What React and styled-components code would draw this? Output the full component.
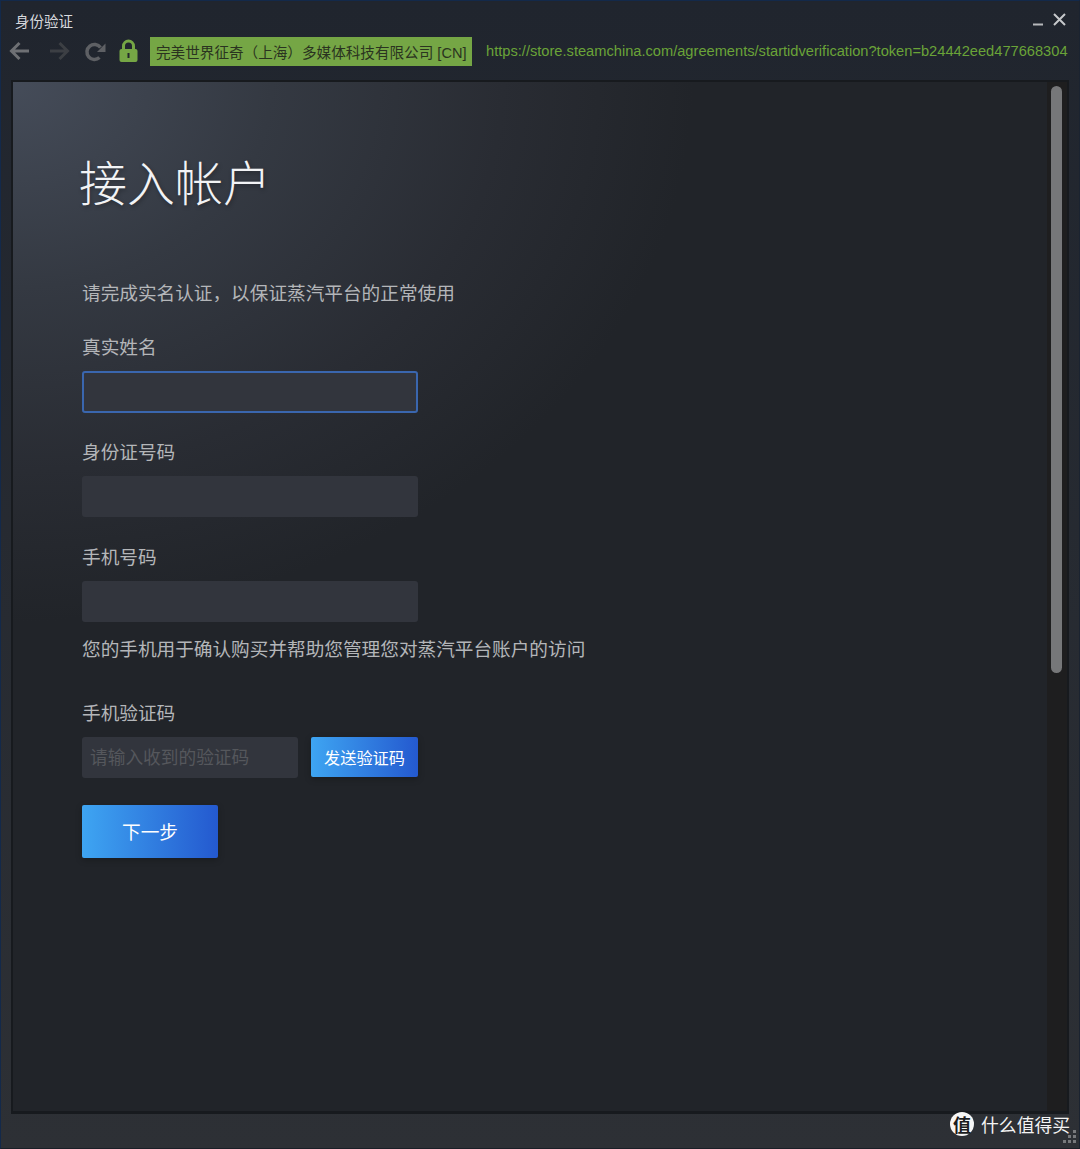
import React from "react";
import styled, { createGlobalStyle } from "styled-components";

const Global = createGlobalStyle`
  html, body { margin: 0; padding: 0; background: #23262c; }
  * { box-sizing: border-box; }
`;

const cjk = `"Noto Sans CJK SC", "Liberation Sans", sans-serif`;

const Win = styled.div`
  position: relative;
  width: 1080px;
  height: 1149px;
  display: flex;
  flex-direction: column;
  overflow: hidden;
  border: 1px solid #13294a;
  border-right-color: #1b2330;
  border-bottom-color: #1a1f27;
  background: linear-gradient(180deg, #20252e 0%, #2d3035 100%);
  font-family: ${cjk};
`;

const TitleBar = styled.div`
  height: 33px;
  flex: none;
  display: flex;
  align-items: center;
  justify-content: space-between;
  padding: 7px 12px 0 14px;
`;

const Title = styled.div`
  color: #d8dade;
  font-size: 14.5px;
  line-height: 20px;
`;

const WinButtons = styled.div`
  display: flex;
  align-items: center;
  gap: 8px;
  margin-top: -4px;
`;

const Toolbar = styled.div`
  height: 34px;
  flex: none;
  display: flex;
  align-items: center;
  padding-left: 7px;
`;

const NavIcon = styled.svg`
  flex: none;
  display: block;
  margin-right: ${(p) => p.$gap || 0}px;
`;

const Badge = styled.div`
  flex: none;
  width: 322px;
  height: 29px;
  margin: 0 14px 0 12px;
  padding-left: 6px;
  display: flex;
  align-items: center;
  background: #75a645;
  color: #2a3320;
  font-family: "Liberation Sans", "Noto Sans CJK SC", sans-serif;
  font-size: 14.6px;
  white-space: nowrap;
`;

const Url = styled.div`
  color: #6aa338;
  font-family: "Liberation Sans", Arial, sans-serif;
  font-size: 14.65px;
  line-height: 18px;
  margin-top: -1px;
  white-space: nowrap;
`;

const Frame = styled.div`
  flex: none;
  margin: 12px 10px 0 10px;
  height: 1034px;
  border: 2px solid #171a1e;
  border-bottom-width: 3px;
  display: flex;
  background: #212429;
`;

const Page = styled.div`
  flex: 1;
  padding: 70px 0 0 69px;
  background: radial-gradient(ellipse 680px 540px at 0 0, #454c59 0%, #343942 38%, #292c33 72%, #212429 100%);
`;

const Heading = styled.h1`
  margin: 0 0 70px -3px;
  color: #f2f3f5;
  font-size: 48px;
  font-weight: 300;
  line-height: 56px;
  text-shadow: 1px 2px 4px rgba(0, 0, 0, 0.3);
`;

const Intro = styled.p`
  margin: 0 0 26px;
  color: #b4b6b9;
  font-size: 18.65px;
  line-height: 28px;
`;

const Label = styled.label`
  display: block;
  color: #b4b6b9;
  font-size: 18.65px;
  line-height: 28px;
  margin-bottom: 11px;
`;

const Field = styled.div`
  margin-bottom: ${(p) => p.$mb}px;
`;

const Input = styled.input`
  display: block;
  width: ${(p) => p.$w || 336}px;
  height: ${(p) => (p.$focus ? 42 : 41)}px;
  border-radius: 3px;
  border: ${(p) => (p.$focus ? "2px solid #3a66ae" : "none")};
  background: #32353d;
  outline: none;
  padding: 0 8px 3px;
  color: #ddd;
  font-family: ${cjk};
  font-size: 17.7px;
  &::placeholder { color: #55575c; opacity: 1; }
`;

const Help = styled.p`
  margin: 0 0 36px;
  color: #b4b6b9;
  font-size: 18.65px;
  line-height: 28px;
`;

const CodeRow = styled.div`
  display: flex;
  align-items: flex-start;
  gap: 13px;
  margin-bottom: 27px;
`;

const GradButton = styled.button`
  display: block;
  border: none;
  border-radius: 2px;
  padding: 0 0 ${(p) => p.$pb}px;
  width: ${(p) => p.$w}px;
  height: ${(p) => p.$h}px;
  background: linear-gradient(90deg, #3ea5f2 0%, #2459cf 100%);
  box-shadow: 0 2px 6px rgba(0, 0, 0, 0.25);
  color: #fff;
  font-family: ${cjk};
  font-size: ${(p) => p.$fs}px;
  cursor: pointer;
`;

const Track = styled.div`
  flex: none;
  width: 20px;
  background: #1e1e1f;
  padding: 4px 5px 0 4px;
`;

const Thumb = styled.div`
  width: 11px;
  height: 587px;
  border-radius: 6px;
  background: #767779;
`;

const Watermark = styled.div`
  position: absolute;
  right: 9px;
  top: 1110px;
  display: flex;
  align-items: center;
  gap: 7px;
  color: #f4f4f4;
  font-size: 17.8px;
  line-height: 26px;
`;

const LogoMark = styled.span`
  width: 24px;
  height: 24px;
  border-radius: 50%;
  background: #f6f6f6;
  color: #1a1c20;
  display: flex;
  align-items: center;
  justify-content: center;
  font-size: 18px;
  font-weight: 700;
  line-height: 24px;
`;

const Grip = styled.svg`
  position: absolute;
  right: 2px;
  bottom: 3px;
`;

export default function App() {
  return (
    <Win>
      <Global />
      <TitleBar>
        <Title>身份验证</Title>
        <WinButtons>
          <svg width="12" height="14" viewBox="0 0 12 14"><path d="M1 12.500h10" stroke="#b6b8bb" strokeWidth="2" /></svg>
          <svg width="15" height="15" viewBox="0 0 15 15"><path d="M2 2l11 11M13 2L2 13" stroke="#c6c8cb" strokeWidth="2" /></svg>
        </WinButtons>
      </TitleBar>
      <Toolbar>
        <NavIcon $gap={19} width="22" height="22" viewBox="0 0 22 22" fill="none">
          <path d="M21 11H4M11.500 3l-8 8 8 8" stroke="#6e7074" strokeWidth="3" />
        </NavIcon>
        <NavIcon $gap={12} width="22" height="22" viewBox="0 0 22 22" fill="none">
          <path d="M1 11h17M10.500 3l8 8-8 8" stroke="#3c3f44" strokeWidth="3" />
        </NavIcon>
        <NavIcon $gap={12} width="24" height="22" viewBox="0 0 24 22" fill="none">
          <path d="M17.500 7.500A7.500 7.500 0 1 0 16.500 17.500" stroke="#5e6064" strokeWidth="3.500" />
          <path d="M22.500 3.500v8.500h-8.500z" fill="#5e6064" />
        </NavIcon>
        <NavIcon width="19" height="24" viewBox="0 0 19 24" fill="none">
          <path d="M4.500 11V7a5 5 0 0 1 10 0v4" stroke="#75a645" strokeWidth="3" />
          <rect x="0.500" y="10" width="18" height="13" rx="2" fill="#75a645" />
          <rect x="8.500" y="14" width="2" height="5" fill="#23262c" />
        </NavIcon>
        <Badge>完美世界征奇（上海）多媒体科技有限公司 [CN]</Badge>
        <Url>https://store.steamchina.com/agreements/startidverification?token=b24442eed477668304</Url>
      </Toolbar>
      <Frame>
        <Page>
          <Heading>接入帐户</Heading>
          <Intro>请完成实名认证，以保证蒸汽平台的正常使用</Intro>
          <Field $mb={24}>
            <Label>真实姓名</Label>
            <Input $focus />
          </Field>
          <Field $mb={25}>
            <Label>身份证号码</Label>
            <Input />
          </Field>
          <Field $mb={12}>
            <Label>手机号码</Label>
            <Input />
          </Field>
          <Help>您的手机用于确认购买并帮助您管理您对蒸汽平台账户的访问</Help>
          <Label>手机验证码</Label>
          <CodeRow>
            <Input $w={216} placeholder="请输入收到的验证码" />
            <GradButton $w={107} $h={40} $fs={16.2} $pb={1}>发送验证码</GradButton>
          </CodeRow>
          <GradButton $w={136} $h={53} $fs={18.65} $pb={3}>下一步</GradButton>
        </Page>
        <Track>
          <Thumb />
        </Track>
      </Frame>
      <Watermark>
        <LogoMark>值</LogoMark>
        什么值得买
      </Watermark>
      <Grip width="16" height="16" viewBox="0 0 16 16" fill="#77797c">
        <rect x="12" y="1" width="3" height="3" />
        <rect x="7" y="6" width="3" height="3" />
        <rect x="12" y="6" width="3" height="3" />
        <rect x="2" y="11" width="3" height="3" />
        <rect x="7" y="11" width="3" height="3" />
        <rect x="12" y="11" width="3" height="3" />
      </Grip>
    </Win>
  );
}
